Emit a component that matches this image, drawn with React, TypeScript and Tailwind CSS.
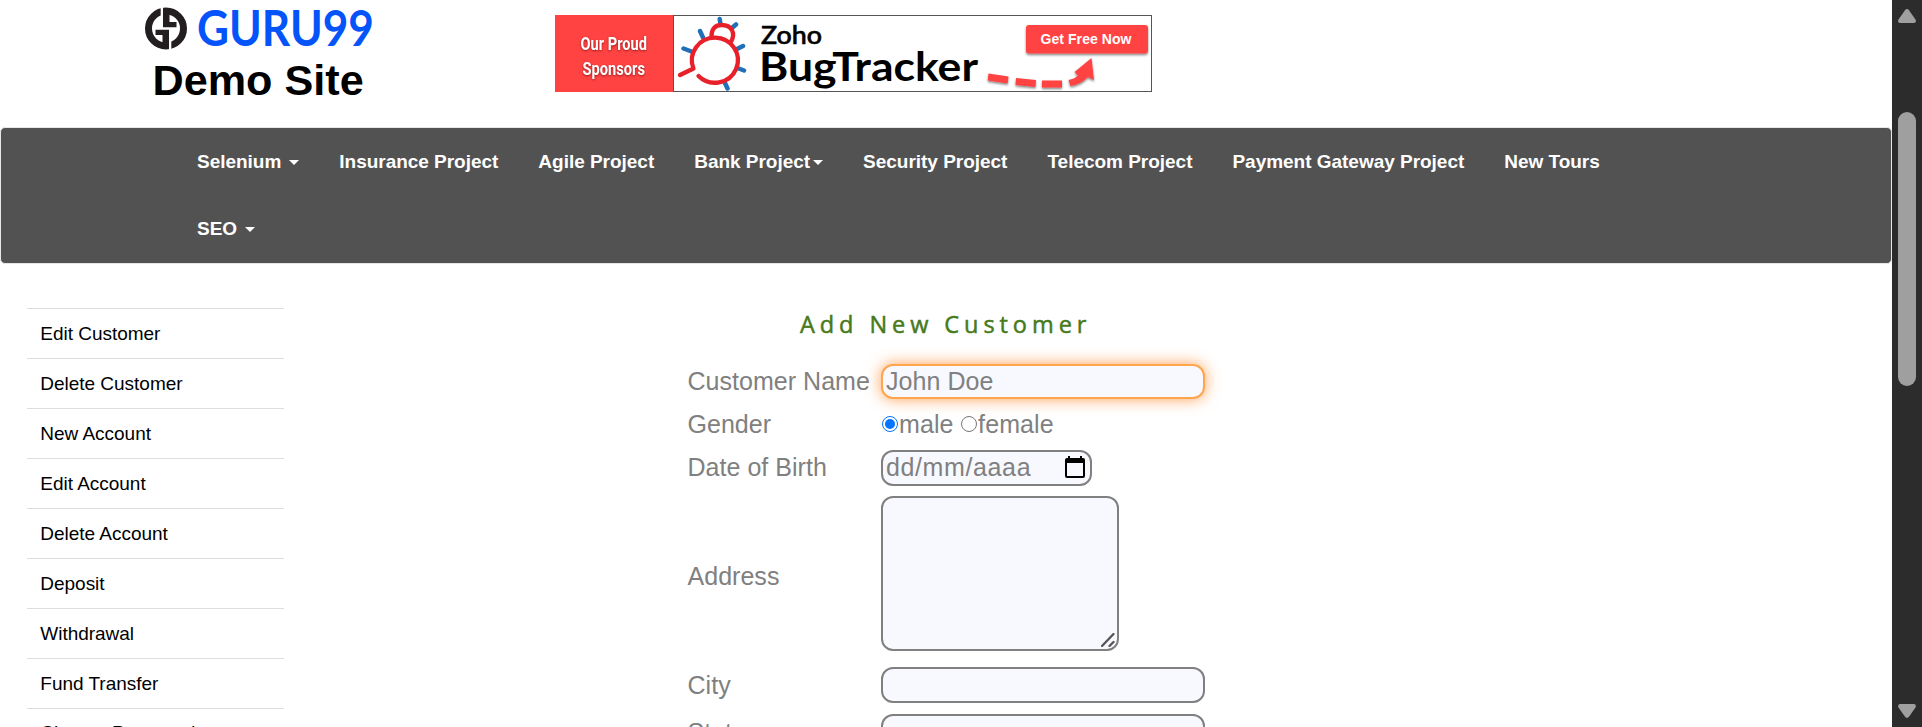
import type { ReactNode } from "react";

const accountLinks = [
  "Edit Customer",
  "Delete Customer",
  "New Account",
  "Edit Account",
  "Delete Account",
  "Deposit",
  "Withdrawal",
  "Fund Transfer",
  "Change Password",
];

function Caret() {
  return (
    <svg width="10" height="5" viewBox="0 0 10 5" className="ml-[3px] shrink-0" fill="#fff">
      <path d="M0 0h10L5 5z" />
    </svg>
  );
}

function NavItem({ label, caret }: { label: string; caret?: "near" | "far" }) {
  return (
    <li className="flex h-[67px] items-center px-5 pt-[2px] whitespace-nowrap">
      <span>{label}</span>
      {caret && (
        <span className={caret === "far" ? "pl-[5px]" : ""}>
          <Caret />
        </span>
      )}
    </li>
  );
}

function Logo() {
  return (
    <svg width="240" height="56" viewBox="140 0 240 56" className="block" role="img" aria-label="Guru99">
      <circle cx="166" cy="28.500" r="17.500" fill="#fff" stroke="#231f20" strokeWidth="7" />
      <path d="M155.500 29.700H169V49h-6.500V35h-7zM176.500 27.300H163V8h6.500v14h7z" fill="#231f20" />
      <path d="M160.700 7h2.300v21h-2.300zM169 29h2.300v21H169z" fill="#fff" />
      <text
        x="197"
        y="45.500"
        fontFamily="Lato, sans-serif"
        fontWeight="700"
        fontSize="49"
        fill="#0554f9"
        textLength="177"
        lengthAdjust="spacingAndGlyphs"
      >
        GURU99
      </text>
    </svg>
  );
}

function BugArt() {
  return (
    <svg width="477" height="75" viewBox="674 16 477 75" className="block">
      <defs>
        <filter id="soft" x="-20%" y="-40%" width="140%" height="200%">
          <feDropShadow dx="0" dy="1.500" stdDeviation="1.300" floodColor="#000" floodOpacity="0.5" />
        </filter>
      </defs>
      <g stroke="#1f6fb9" strokeWidth="4.500" strokeLinecap="round">
        <path d="M719.700 19l.8 5M736 24.500l-3.500 3M700 31l3 6.500M683.500 48.500l8 3M743 46l-6 3M744 70.500l-6.500-2.500M727.500 88.500l-3-6.500" />
      </g>
      <g fill="none" stroke="#e8202a" strokeWidth="4.300" strokeLinecap="round" strokeLinejoin="round">
        <path d="M711.500 36c0-8 4.500-11 10-11c10 0 15 8 9 17.500" />
        <path d="M680 75l13.500-6.500A23 22.500 0 1 1 698.500 76" />
      </g>
      <g fill="#000" fontFamily="Lato, sans-serif">
        <text x="761" y="43.500" fontSize="25" fontWeight="500" stroke="#000" strokeWidth=".6" textLength="61" lengthAdjust="spacingAndGlyphs">
          Zoho
        </text>
        <text x="759" y="80.500" fontSize="40" fontWeight="700" textLength="219" lengthAdjust="spacingAndGlyphs">
          BugTracker
        </text>
      </g>
      <g filter="url(#soft)" fill="#ff4343">
        <rect x="1026" y="25" width="122" height="28.500" rx="3" />
        <path d="M988.500 73.500l20 3-.8 7-20-3zM1016 78l20 2-.5 7-20-2zM1042 80.500h20v7h-20zM1068.500 80q6-1 9.500-4.500l-3.500-3.500 17-14 2.500 22-6-3q-8 8-17.500 9z" />
      </g>
      <text x="1040.500" y="43.500" fontFamily="'Liberation Sans', sans-serif" fontWeight="700" fontSize="14" fill="#fff" textLength="91">
        Get Free Now
      </text>
    </svg>
  );
}

function SponsorBanner() {
  return (
    <div className="flex h-[77px] w-[597px]">
      <div className="w-[118px] bg-[#ff4343]">
        <svg width="118" height="77" viewBox="555 15 118 77" className="block">
          <g
            fill="#fff"
            fontFamily="Roboto, sans-serif"
            fontWeight="700"
            fontSize="19"
            className="drop-shadow-[0_1px_1px_rgba(90,0,0,0.6)]"
          >
            <text x="580.500" y="50" textLength="66.500" lengthAdjust="spacingAndGlyphs">
              Our Proud
            </text>
            <text x="582.500" y="75" textLength="62.500" lengthAdjust="spacingAndGlyphs">
              Sponsors
            </text>
          </g>
        </svg>
      </div>
      <div className="w-[479px] border border-[#555]">
        <BugArt />
      </div>
    </div>
  );
}

function Row({ label, className, children }: { label: string; className: string; children: ReactNode }) {
  return (
    <div className={`flex items-center ${className}`}>
      <div className="w-[193.500px] shrink-0 tracking-[0.030px]">{label}</div>
      {children}
    </div>
  );
}

function CalendarIcon() {
  return (
    <svg width="20" height="22" viewBox="0 0 20 22" className="mb-[2px] block">
      <path
        fill="#000"
        fillRule="evenodd"
        d="M3 0h2v2h10V0h2v2h1a2 2 0 0 1 2 2v16a2 2 0 0 1-2 2H2a2 2 0 0 1-2-2V4a2 2 0 0 1 2-2h1zM2 7V20h16V7z"
      />
    </svg>
  );
}

function Scrollbar() {
  return (
    <div className="flex w-[30px] shrink-0 flex-col items-center bg-[#2c2c2c] pt-[9px] pb-[9px]">
      <svg width="18" height="14" viewBox="0 0 18 14" className="block shrink-0">
        <path d="M7 1.200q2-2.200 4 0l6.500 9.300q1.200 3.300-1.700 3.500H2.200Q-.7 13.800.5 10.500z" fill="#a0a0a0" />
      </svg>
      <div className="mt-[89px] h-[274px] w-[18px] rounded-full bg-[#9f9f9f]" />
      <svg width="18" height="14" viewBox="0 0 18 14" className="mt-auto block shrink-0">
        <path d="M7 12.800q2 2.200 4 0l6.500-9.300q1.200-3.300-1.700-3.500H2.200Q-.7.200.5 3.500z" fill="#a0a0a0" />
      </svg>
    </div>
  );
}

export default function App() {
  return (
    <div className="flex h-[727px] w-full overflow-hidden bg-white font-['Liberation_Sans',sans-serif]">
      <div className="min-w-0 flex-1">
        <header className="flex h-[127px]">
          <div className="w-[555px] shrink-0 pl-[140px]">
            <Logo />
            <h2 className="pl-[12.500px] text-[43.200px] leading-[48px] font-bold text-black">Demo Site</h2>
          </div>
          <div className="pt-[15px]">
            <SponsorBanner />
          </div>
        </header>

        <nav className="h-[137px] rounded-[5px] border border-[#e7e7e7] bg-[#525252] pl-[176px] text-[19px] font-bold tracking-[-0.023px] text-white">
          <ul className="flex h-[67px]">
            <NavItem label="Selenium" caret="far" />
            <NavItem label="Insurance Project" />
            <NavItem label="Agile Project" />
            <NavItem label="Bank Project" caret="near" />
            <NavItem label="Security Project" />
            <NavItem label="Telecom Project" />
            <NavItem label="Payment Gateway Project" />
            <NavItem label="New Tours" />
          </ul>
          <ul className="flex h-[67px]">
            <NavItem label="SEO" caret="far" />
          </ul>
        </nav>

        <main className="flex pt-11 pl-[27px]">
          <ul className="w-[257px] shrink-0 text-[19px] text-black">
            {accountLinks.map((link) => (
              <li
                key={link}
                className="flex h-[50px] items-center border-t border-[#ddd] pt-[2px] pl-[13.300px] tracking-[-0.020px] last:pt-0"
              >
                {link}
              </li>
            ))}
          </ul>

          <form className="ml-[403.500px] w-[520px] text-[25px] text-[#808080]">
            <h3 className="h-[52px] pl-[112.500px] font-['Open_Sans',sans-serif] text-[23.500px] leading-[32px] font-medium tracking-[4.930px] whitespace-nowrap text-[#467a1b] [-webkit-text-stroke:0.500px_#467a1b]">
              Add New Customer
            </h3>
            <Row label="Customer Name" className="h-[43px]">
              <input
                placeholder="John Doe"
                className="h-[35px] w-[324px] rounded-[12px] border-2 border-[#ffa54c] bg-[#f8f8ff] px-[3px] tracking-[0.050px] shadow-[0_0_15px_rgba(255,130,30,0.75)] outline-none placeholder:text-[#808080]"
              />
            </Row>
            <Row label="Gender" className="h-[43px]">
              <span className="mb-[1px] ml-[1px] flex size-4 items-center justify-center rounded-full border-[1.500px] border-[#0075ff]">
                <span className="size-[10px] rounded-full bg-[#0075ff]" />
              </span>
              <span className="ml-[1px] tracking-[0.100px]">male</span>
              <span className="mb-[1px] ml-[7px] size-4 rounded-full border border-[#767676] bg-white" />
              <span className="ml-[1.500px] tracking-[0.100px]">female</span>
            </Row>
            <Row label="Date of Birth" className="h-11">
              <div className="flex h-9 w-[211px] items-center justify-between rounded-[12px] border-2 border-[#808080] bg-[#f8f8ff] pr-[5px] pl-[3px]">
                <span className="tracking-[0.620px]">dd/mm/aaaa</span>
                <CalendarIcon />
              </div>
            </Row>
            <Row label="Address" className="h-[171px] [&>div:first-child]:pt-[2px]">
              <div className="mb-1 flex h-[155px] w-[238px] items-end justify-end rounded-[12px] border-2 border-[#808080] bg-[#f8f8ff] pr-[2px] pb-[2px]">
                <svg width="14" height="14" viewBox="0 0 14 14" className="block" stroke="#555" strokeWidth="2.300" strokeLinecap="round">
                  <path d="M1 13L12.500 1M8.500 13L12.500 9" />
                </svg>
              </div>
            </Row>
            <Row label="City" className="h-12 [&>div:first-child]:pt-[2px]">
              <div className="h-9 w-[324px] rounded-[12px] border-2 border-[#808080] bg-[#f8f8ff]" />
            </Row>
            <Row label="State" className="h-[46px] [&>div:first-child]:pt-[1px]">
              <div className="h-9 w-[324px] rounded-[12px] border-2 border-[#808080] bg-[#f8f8ff]" />
            </Row>
          </form>
        </main>
      </div>
      <Scrollbar />
    </div>
  );
}
